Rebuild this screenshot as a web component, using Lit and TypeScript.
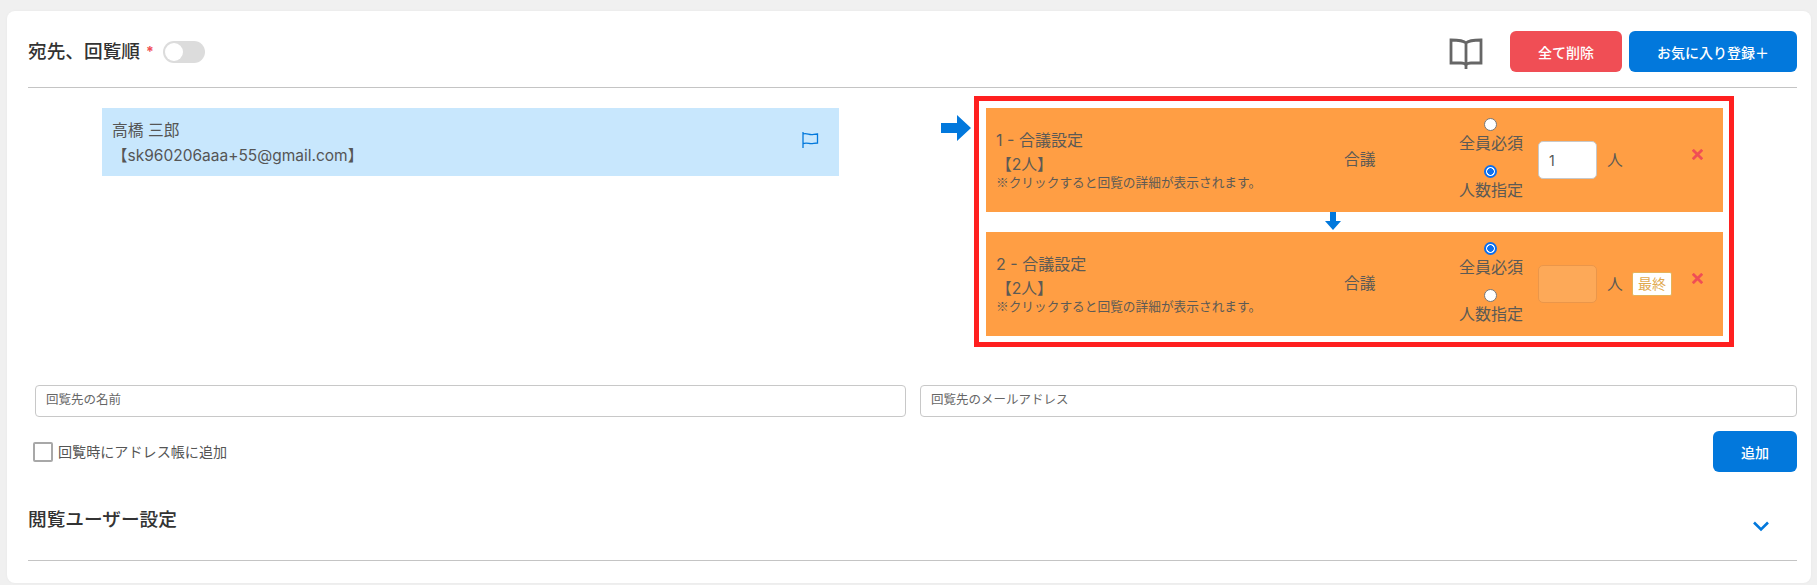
import { LitElement, html, css, svg } from "lit";
import { customElement } from "lit/decorators.js";

const steps = [
  { n: 1, all: false, value: "1", disabled: false, last: false },
  { n: 2, all: true, value: "", disabled: true, last: true },
];

@customElement("app-root")
export class AppRoot extends LitElement {
  static styles = css`
    :host { display: block; width: 1817px; height: 585px; background: #f0f0f0; overflow: hidden;
      font-family: Inter, "Noto Sans CJK JP", sans-serif; color: #555; box-sizing: border-box; padding: 11px 6px 2px 7px; }
    * { box-sizing: border-box; }
    .card { height: 572px; background: #fff; border-radius: 8px; padding: 0 14px 0 21px; box-shadow: 0 0 3px rgba(0,0,0,.04); }
    .head { height: 77px; display: flex; align-items: center; border-bottom: 1px solid #c4c4c4; padding-top: 5px; }
    .title { font-size: 18.66px; font-weight: 500; color: #333; line-height: 24px; }
    .req { color: #f04e55; font-size: 14px; margin-left: 6px; font-weight: 700; }
    .toggle { width: 42px; height: 22px; border-radius: 11px; background: #dcdcdc; margin-left: 9px; padding: 2px; }
    .knob { width: 18px; height: 18px; border-radius: 50%; background: #fff; }
    .spacer { flex: 1; }
    .book { width: 34px; height: 31px; margin-right: 27px; margin-top: 3px; display: block; }
    .btn { border: 0; height: 41px; border-radius: 6px; color: #fff; font: 500 14px Inter, "Noto Sans CJK JP", sans-serif; padding: 0; }
    .del { width: 112px; background: #f04e55; margin-right: 7px; }
    .fav { width: 168px; background: #0278dc; }
    .main { display: flex; align-items: flex-start; }
    .person { width: 737px; height: 68px; margin: 20px 0 0 74px; background: #c8e7fd; padding: 10px 10px 0 10px; display: flex; justify-content: space-between; font-size: 15.75px; line-height: 25px; }
    .email { font-size: 15.5px; }
    .flag { width: 18px; height: 18px; margin: 13px 10px 0 0; }
    .arrow { width: 30px; height: 26px; margin: 27px 3px 0 102px; flex: none; }
    .frame { width: 760px; margin-top: 8px; border: 5px solid #ff1f1f; padding: 7px 6px 6px 7px; }
    .step { height: 104px; background: #ff9e44; display: flex; align-items: center; padding-left: 10px; color: #5c5a55; }
    .info { width: 348px; flex: none; }
    .info-title { font-size: 16px; line-height: 25px; }
    .info-count { font-size: 15.75px; line-height: 24px; }
    .note { font-size: 12.7px; line-height: 18px; margin-top: -4px; }
    .mark { font-family: "Noto Sans CJK JP", sans-serif; }
    .kind { width: 112px; flex: none; font-size: 15.75px; margin-bottom: 3px; }
    .radios { width: 70px; flex: none; align-self: flex-start; margin-top: 10px; display: flex; flex-direction: column; align-items: center; gap: 10px; font-size: 16px; }
    .opt { display: flex; flex-direction: column; align-items: center; line-height: 24px; white-space: nowrap; }
    .radio { appearance: none; margin: 0; width: 13px; height: 13px; border-radius: 50%; background: #fff; border: 1px solid #777; display: block; }
    .radio:checked { border: 2px solid #0a6ff0; background: radial-gradient(circle, #0a6ff0 0 3px, #fff 3.6px); }
    .num { width: 59px; height: 38px; margin-left: 12px; flex: none; border: 1px solid #c8c8c8; border-radius: 5px; background: #fff; padding: 0 10px; font: 14px Inter, sans-serif; color: #555; outline: none; }
    .num:disabled { background: #fda958; border-color: #ea964a; }
    .unit { margin: 0 0 2px 10px; width: 16px; font-size: 15.75px; flex: none; }
    .badge { margin-left: 9px; width: 40px; height: 24px; flex: none; background: #fff; border: 1px solid #e5b35a; border-radius: 2px; color: #dfa94e; font-size: 14px; line-height: 22px; text-align: center; }
    .x { width: 11px; height: 11px; margin: 41px 20px 0 auto; align-self: flex-start; flex: none; display: block; }
    .down { height: 20px; display: flex; padding-left: 339px; }
    .down svg { width: 16px; height: 18px; display: block; }
    .fields { display: grid; grid-template-columns: 871px 877px; gap: 14px; margin: 38px 0 0 7px; }
    .field { height: 32px; width: 100%; border: 1px solid #c8c8c8; border-radius: 4px; padding: 0 10px 3px; font: 12.5px Inter, "Noto Sans CJK JP", sans-serif; outline: none; background: #fff; }
    .field::placeholder { color: #666; opacity: 1; }
    .add-row { display: flex; align-items: center; justify-content: space-between; margin: 14px 0 0 5px; height: 41px; }
    .check { display: flex; align-items: center; font-size: 14.1px; color: #555; }
    .check span { margin-bottom: 2px; }
    .box { width: 20px; height: 20px; border: 2px solid #a8a8a8; border-radius: 2px; margin-right: 5px; }
    .add { width: 84px; background: #0278dc; }
    .sec { height: 89px; display: flex; justify-content: space-between; border-bottom: 1px solid #c4c4c4; padding-top: 36px; }
    .chev { width: 18px; height: 12px; margin: 12px 27px 0 0; display: block; }
  `;

  private step(s: (typeof steps)[number]) {
    return html`<div class="step">
      <div class="info">
        <div class="info-title">${s.n} - 合議設定</div>
        <div class="info-count">【2人】</div>
        <div class="note"><span class="mark">※</span>クリックすると回覧の詳細が表示されます。</div>
      </div>
      <div class="kind">合議</div>
      <div class="radios">
        <label class="opt"><input class="radio" type="radio" name="r${s.n}" ?checked=${s.all} />全員必須</label>
        <label class="opt"><input class="radio" type="radio" name="r${s.n}" ?checked=${!s.all} />人数指定</label>
      </div>
      <input class="num" .value=${s.value} ?disabled=${s.disabled} />
      <span class="unit">人</span>
      ${s.last ? html`<span class="badge">最終</span>` : ""}
      <svg class="x" viewBox="0 0 11 11"><path d="M.8.8 10.2 10.2M10.2.8.8 10.2" stroke="#f04e55" stroke-width="2.8" fill="none"/></svg>
    </div>`;
  }

  render() {
    return html`<div class="card">
      <div class="head">
        <span class="title">宛先、回覧順</span><span class="req">*</span>
        <div class="toggle"><div class="knob"></div></div>
        <div class="spacer"></div>
        <svg class="book" viewBox="0 0 34 31" fill="none" stroke="#666" stroke-width="2.8">
          ${svg`<path d="M17 5C15 3 11 2 2 2V25H12C14 25 16 25.5 17 27C18 25.5 20 25 22 25H32V2C23 2 19 3 17 5ZM17 5V31"/>`}
        </svg>
        <button class="btn del">全て削除</button>
        <button class="btn fav">お気に入り登録＋</button>
      </div>
      <div class="main">
        <div class="person">
          <div>高橋 三郎<br /><span class="email">【sk960206aaa+55@gmail.com】</span></div>
          <svg class="flag" viewBox="0 0 18 18" fill="none" stroke="#0278dc" stroke-width="1.3">
            ${svg`<path d="M2 1V17M2 3C6 1.8 8 4.2 11.5 3.6C13 3.4 15 3 16.5 3V12C13 12 11 13 8 12.4C6 12 4 11.8 2 12.6"/>`}
          </svg>
        </div>
        <svg class="arrow" viewBox="0 0 30 26"><path d="M0 8H16V0L30 13 16 26V18H0Z" fill="#0278dc"/></svg>
        <div class="frame">
          ${this.step(steps[0])}
          <div class="down"><svg viewBox="0 0 16 18"><path d="M5 0H11V9H16L8 18 0 9H5Z" fill="#0278dc"/></svg></div>
          ${this.step(steps[1])}
        </div>
      </div>
      <div class="fields">
        <input class="field" placeholder="回覧先の名前" />
        <input class="field" placeholder="回覧先のメールアドレス" />
      </div>
      <div class="add-row">
        <label class="check"><div class="box"></div><span>回覧時にアドレス帳に追加</span></label>
        <button class="btn add">追加</button>
      </div>
      <div class="sec">
        <span class="title">閲覧ユーザー設定</span>
        <svg class="chev" viewBox="0 0 18 12"><path d="M2 2.5 9 9.5 16 2.5" fill="none" stroke="#0278dc" stroke-width="2.6"/></svg>
      </div>
    </div>`;
  }
}
